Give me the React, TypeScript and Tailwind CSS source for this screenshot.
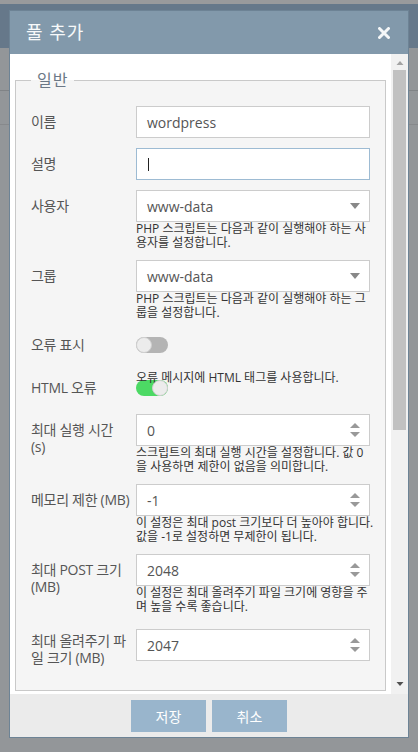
import type { ReactNode } from "react";

const FONT = "font-['Open_Sans','Noto_Sans_CJK_KR',sans-serif]";

export default function App() {
  return (
    <div className={`relative h-[752px] w-[418px] overflow-hidden bg-[#939699] ${FONT}`}>
      <Backdrop />
      <div className="absolute left-[9px] top-[10px] w-[400px] border border-[#6d8395] bg-[#ebebeb]">
        <header className="flex h-[43px] items-center justify-between bg-[#8299ab] pl-[16px] pr-[18px]">
          <h1 className="text-[18px] tracking-[1px] text-[#f7f9fa]">풀 추가</h1>
          <CloseIcon />
        </header>

        <div className="flex h-[640px] bg-white">
          <div className="flex-1 overflow-hidden px-[5px] pt-[15px]">
            <fieldset className="border border-[#c9c9c9] bg-[#f5f5f5] px-[15px] pb-[24px]">
              <legend className="px-[6px] text-[16px] leading-[22px] tracking-[1px] text-[#6b7886]">일반</legend>
              <div className="pt-[15px]">
                <Row label="이름">
                  <TextBox value="wordpress" />
                </Row>
                <Row label="설명">
                  <div className="flex h-[32px] items-center border border-[#9dbbd3] bg-white px-[11px]">
                    <span className="h-[13px] w-px bg-[#222]" />
                  </div>
                </Row>
                <Row label="사용자" help={["PHP 스크립트는 다음과 같이 실행해야 하는 사", "용자를 설정합니다."]}>
                  <SelectBox value="www-data" />
                </Row>
                <Row label="그룹" help={["PHP 스크립트는 다음과 같이 실행해야 하는 그", "룹을 설정합니다."]} mb="mb-[17px]">
                  <SelectBox value="www-data" />
                </Row>

                <div className="mb-[18px] flex h-[16px] items-center">
                  <span className="w-[105px] text-[14px] leading-[16px] tracking-[-0.3px] text-[#555]">오류 표시</span>
                  <Toggle on={false} />
                </div>

                <div className="mb-[18px] flex">
                  <span className="w-[105px] pt-[8px] text-[14px] leading-[17px] tracking-[-0.3px] text-[#555]">HTML 오류</span>
                  <div className="w-[234px]">
                    <p className="whitespace-nowrap text-[12px] leading-[14px] text-[#333]">오류 메시지에 HTML 태그를 사용합니다.</p>
                    <div className="-mt-[5px]">
                      <Toggle on />
                    </div>
                  </div>
                </div>

                <Row label={["최대 실행 시간", "(s)"]} help={["스크립트의 최대 실행 시간을 설정합니다. 값 0", "을 사용하면 제한이 없음을 의미합니다."]}>
                  <NumberBox value="0" />
                </Row>
                <Row label="메모리 제한 (MB)" help={["이 설정은 최대 post 크기보다 더 높아야 합니다.", "값을 -1로 설정하면 무제한이 됩니다."]}>
                  <NumberBox value="-1" />
                </Row>
                <Row label={["최대 POST 크기", "(MB)"]} help={["이 설정은 최대 올려주기 파일 크기에 영향을 주", "며 높을 수록 좋습니다."]} mb="mb-[15px]">
                  <NumberBox value="2048" />
                </Row>
                <Row label={["최대 올려주기 파", "일 크기 (MB)"]} labelPad="pt-[3px]" mb="mb-0">
                  <NumberBox value="2047" />
                </Row>
              </div>
            </fieldset>
          </div>
          <Scrollbar />
        </div>

        <footer className="flex h-[43px] justify-center gap-[6px] pt-[6px]">
          <button type="button" className="h-[32px] w-[75px] bg-[#99b5cc] text-[14px] text-white">
            저장
          </button>
          <button type="button" className="h-[32px] w-[75px] bg-[#99b5cc] text-[14px] text-white">
            취소
          </button>
        </footer>
      </div>
    </div>
  );
}

function Backdrop() {
  return (
    <div>
      <div className="h-[4px] bg-[#999a9c]" />
      <div className="h-[44px] bg-[#66788a]" />
      <div className="h-[43px] border-b border-[#808386]" />
      <div className="h-[34px] border-b border-[#87898c]" />
    </div>
  );
}

function Lines({ text }: { text: string | string[] }) {
  const lines = Array.isArray(text) ? text : [text];
  return (
    <>
      {lines.map((l, i) => (
        <span key={i} className="block whitespace-nowrap">
          {l}
        </span>
      ))}
    </>
  );
}

function Row({
  label,
  help,
  mb = "mb-[10px]",
  labelPad = "pt-[7px]",
  children,
}: {
  label: string | string[];
  help?: string[];
  mb?: string;
  labelPad?: string;
  children: ReactNode;
}) {
  return (
    <div className={`flex ${mb}`}>
      <span className={`w-[105px] text-[14px] leading-[17px] tracking-[-0.3px] text-[#555] ${labelPad}`}>
        <Lines text={label} />
      </span>
      <div className="w-[234px]">
        {children}
        {help && (
          <p className="text-[12px] leading-[14px] text-[#333]">
            <Lines text={help} />
          </p>
        )}
      </div>
    </div>
  );
}

function TextBox({ value }: { value: string }) {
  return (
    <div className="flex h-[32px] items-center border border-[#ccc] bg-white px-[10px] text-[14px] text-[#555]">
      {value}
    </div>
  );
}

function SelectBox({ value }: { value: string }) {
  return (
    <div className="flex h-[32px] items-center justify-between border border-[#ccc] bg-white pl-[10px] pr-[9px] text-[14px] text-[#555]">
      <span>{value}</span>
      <svg width="10" height="6" viewBox="0 0 10 6">
        <path d="M0 0h10L5 6z" fill="#888" />
      </svg>
    </div>
  );
}

function NumberBox({ value }: { value: string }) {
  return (
    <div className="flex h-[32px] items-center justify-between border border-[#ccc] bg-white pl-[10px] pr-[9px] text-[14px] text-[#555]">
      <span>{value}</span>
      <svg width="10" height="14" viewBox="0 0 10 14">
        <path d="M5 0l5 5H0z" fill="#999" />
        <path d="M0 9h10l-5 5z" fill="#999" />
      </svg>
    </div>
  );
}

function Toggle({ on }: { on: boolean }) {
  return (
    <div className={`flex h-[16px] w-[32px] items-center rounded-full ${on ? "justify-end bg-[#4cd964]" : "justify-start bg-[#b4b4b4]"}`}>
      <span className="h-[16px] w-[16px] rounded-full border border-[#d0d0d0] bg-[#ececec]" />
    </div>
  );
}

function Scrollbar() {
  return (
    <div className="flex w-[17px] flex-col items-center bg-[#f1f1f1]">
      <svg width="8" height="16" viewBox="0 0 8 16" className="shrink-0">
        <path d="M4 7l3.5 4h-7z" fill="#a3a3a3" />
      </svg>
      <div className="h-[360px] w-[13px] bg-[#c1c1c1]" />
      <div className="flex-1" />
      <svg width="8" height="16" viewBox="0 0 8 16" className="shrink-0">
        <path d="M0.5 4h7L4 8z" fill="#505050" />
      </svg>
    </div>
  );
}

function CloseIcon() {
  return (
    <svg width="12" height="12" viewBox="0 0 12 12">
      <path d="M1.5 1.5l9 9M10.5 1.5l-9 9" stroke="#f5f7f8" strokeWidth="3" strokeLinecap="round" />
    </svg>
  );
}
